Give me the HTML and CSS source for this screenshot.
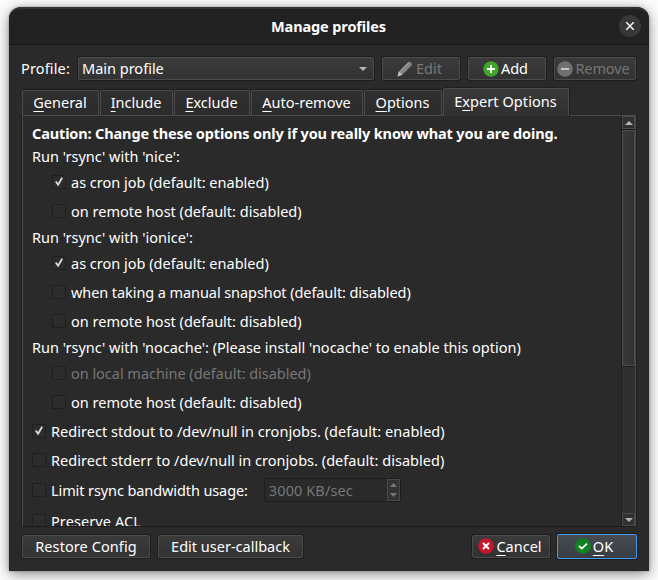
FILE: index.html
```html
<!DOCTYPE html>
<html lang="en">
<head>
<meta charset="utf-8">
<title>Manage profiles</title>
<link rel="stylesheet" href="styles.css">
</head>
<body>
<main class="window">
  <header class="titlebar">
    <h1>Manage profiles</h1>
    <button class="close" aria-label="Close"><svg width="10" height="10" viewBox="0 0 10 10"><path d="M1.3 1.3l7.4 7.4M8.7 1.3L1.3 8.7" stroke="#fff" stroke-width="1.5"/></svg></button>
  </header>
  <section class="profile-row">
    <span class="profile-label">Profile:</span>
    <div class="btn combo"><span>Main profile</span><svg width="8" height="4" viewBox="0 0 8 4"><path d="M0 0h8L4 4z" fill="#b5b5b5"/></svg></div>
    <button class="btn edit off"><svg width="16" height="16" viewBox="0 0 16 16"><path d="M.4 15.6l1.5-5L11 1.2c1.4-1.3 4.6.8 3.8 3L5.4 13.7z" fill="#858585"/><path d="M.4 15.6l1.5-5 3.5 3.1z" fill="#c4c4c4"/><path d="M3.5 10L12 1.5" stroke="#aaa"/></svg><span>Edit</span></button>
    <button class="btn add"><svg width="16" height="16" viewBox="0 0 16 16"><circle cx="8" cy="8" r="7.7" fill="#43a528"/><path d="M8 4v8M4 8h8" stroke="#fff" stroke-width="1.8"/></svg><span>Add</span></button>
    <button class="btn remove off"><svg width="16" height="16" viewBox="0 0 16 16"><circle cx="8" cy="8" r="7.8" fill="#707070"/><path d="M4 8h8" stroke="#d0d0d0" stroke-width="1.8"/></svg><span>Remove</span></button>
  </section>
  <nav class="tabs">
    <div class="tab general"><span><u>G</u>eneral</span></div>
    <div class="tab include"><span><u>I</u>nclude</span></div>
    <div class="tab exclude"><span><u>E</u>xclude</span></div>
    <div class="tab auto"><span><u>A</u>uto-remove</span></div>
    <div class="tab options"><span><u>O</u>ptions</span></div>
    <div class="tab expert active"><span>E<u>x</u>pert Options</span></div>
  </nav>
  <section class="pane">
    <div class="list">
      <div class="row head caution"><span>Caution: Change these options only if you really know what you are doing.</span></div>
      <div class="row head"><span>Run 'rsync' with 'nice':</span></div>
      <div class="row sub"><i class="box"><svg width="8" height="9" viewBox="0 0 8 9"><path d="M.8 4.5l2.3 3.2L7.2.8" fill="none" stroke="#ddd" stroke-width="1.8"/></svg></i><span>as cron job (default: enabled)</span></div>
      <div class="row sub"><i class="box"></i><span>on remote host (default: disabled)</span></div>
      <div class="row head"><span>Run 'rsync' with 'ionice':</span></div>
      <div class="row sub"><i class="box"><svg width="8" height="9" viewBox="0 0 8 9"><path d="M.8 4.5l2.3 3.2L7.2.8" fill="none" stroke="#ddd" stroke-width="1.8"/></svg></i><span>as cron job (default: enabled)</span></div>
      <div class="row sub manual"><i class="box"></i><span>when taking a manual snapshot (default: disabled)</span></div>
      <div class="row sub"><i class="box"></i><span>on remote host (default: disabled)</span></div>
      <div class="row head"><span>Run 'rsync' with 'nocache': (Please install 'nocache' to enable this option)</span></div>
      <div class="row sub off local"><i class="box"></i><span>on local machine (default: disabled)</span></div>
      <div class="row sub"><i class="box"></i><span>on remote host (default: disabled)</span></div>
      <div class="row redirect"><i class="box"><svg width="8" height="9" viewBox="0 0 8 9"><path d="M.8 4.5l2.3 3.2L7.2.8" fill="none" stroke="#ddd" stroke-width="1.8"/></svg></i><span>Redirect stdout to /dev/null in cronjobs. (default: enabled)</span></div>
      <div class="row redirect"><i class="box"></i><span>Redirect stderr to /dev/null in cronjobs. (default: disabled)</span></div>
      <div class="row limit"><i class="box"></i><span>Limit rsync bandwidth usage:</span>
        <div class="spin off"><span>3000 KB/sec</span><div class="steps"><svg width="7" height="14" viewBox="0 0 7 14"><path d="M0 4L3.5 0 7 4zM0 10h7L3.5 14z" fill="#777"/></svg></div></div>
      </div>
      <div class="row acl"><i class="box"></i><span>Preserve ACL</span></div>
    </div>
    <div class="scrollbar">
      <div class="arrow"><svg width="8" height="4" viewBox="0 0 8 4"><path d="M0 4L4 0l4 4z" fill="#b5b5b5"/></svg></div>
      <div class="thumb"></div>
      <div class="track"></div>
      <div class="arrow"><svg width="8" height="4" viewBox="0 0 8 4"><path d="M0 0h8L4 4z" fill="#b5b5b5"/></svg></div>
    </div>
  </section>
  <footer class="actions">
    <button class="btn restore"><span>Restore Config</span></button>
    <button class="btn callback"><span>Edit user-callback</span></button>
    <button class="btn cancel"><svg width="16" height="16" viewBox="0 0 16 16"><circle cx="8" cy="8" r="7.8" fill="#c7162b"/><path d="M5 5l6 6M11 5l-6 6" stroke="#fff" stroke-width="1.9"/></svg><span><u>C</u>ancel</span></button>
    <button class="btn ok"><svg width="16" height="16" viewBox="0 0 16 16"><circle cx="8" cy="8" r="7.8" fill="#0e8420"/><path d="M4 7.8l2.8 2.8L12 5.6" fill="none" stroke="#fff" stroke-width="1.8"/></svg><span><u>O</u>K</span></button>
  </footer>
</main>
</body>
</html>
```
FILE: styles.css
```css
* { box-sizing: border-box; }
html, body { height: 100%; }
body {
  margin: 0;
  padding: 7px 9px 9px;
  overflow: hidden;
  background: #fcfcfc;
  font: 14.5px/20px "Noto Sans", "Open Sans", sans-serif;
  color: #fff;
}
svg { display: block; flex: none; }
span { white-space: nowrap; }
u { text-decoration: underline; text-decoration-thickness: 1px; text-underline-offset: 3px; text-decoration-skip-ink: none; }
.window {
  width: 640px;
  height: 564px;
  background: #2a2a2a;
  border-radius: 12px 12px 0 0;
  box-shadow: 0 3px 14px rgba(0, 0, 0, .45), 0 0 3px rgba(0, 0, 0, .3);
}
.titlebar {
  height: 38px;
  display: grid;
  grid-template-columns: 40px 1fr 40px;
  align-items: center;
  background: #222;
  border-top: 2px solid #333;
  border-bottom: 1px solid #171717;
  border-radius: 12px 12px 0 0;
}
h1 { grid-column: 2; margin: 0; padding: 0 1px 2px 0; text-align: center; font-size: 14.5px; line-height: 20px; font-weight: 700; letter-spacing: -.12px; }
.close { width: 22px; height: 22px; padding: 0; border: 0; border-radius: 50%; background: #383838; display: grid; place-items: center; margin: 0 0 2px 10px; }
.profile-row { display: flex; align-items: center; height: 23px; margin: 12px 12px 0; }
.profile-label { width: 57px; padding-bottom: 1px; letter-spacing: .15px; }
.btn {
  height: 23px;
  padding: 0;
  display: flex;
  align-items: center;
  justify-content: center;
  gap: 2px;
  font: inherit;
  color: #fff;
  background: linear-gradient(#3b3b3b, #323232);
  border: 1px solid #4b4b4b;
  border-radius: 2px;
  box-shadow: 0 0 0 1px #1e1e1e;
}
.btn span, .tab span { padding-bottom: 1px; }
.combo { width: 296px; padding: 0 6px 0 3px; justify-content: space-between; margin-right: 8px; }
.edit { width: 78px; margin-right: 8px; }
.add { width: 78px; margin-right: 8px; }
.remove { width: 82px; letter-spacing: -.1px; }
.add svg, .edit svg, .remove svg { margin-left: -3px; }
.edit { gap: 3px; }
.btn.off, .off { color: #777; }
.tabs { height: 27px; margin: 8px 12px 0 13px; display: flex; align-items: flex-end; gap: 1px; }
.tab {
  height: 25px;
  display: flex;
  justify-content: center;
  align-items: center;
  background: linear-gradient(#303030, #2b2b2b);
  border: 1px solid #4b4b4b;
  border-bottom: 0;
  border-radius: 2px 2px 0 0;
  box-shadow: 0 -1px 0 #1e1e1e;
}
.tab span { padding: 0 1px 2px 0; }
.general { width: 77px; }
.include { width: 73px; }
.exclude { width: 76px; }
.auto { width: 112px; }
.options { width: 78px; }
.expert { width: 126px; letter-spacing: .07px; }
.tab.active { height: 28px; margin-bottom: -1px; background: linear-gradient(#393939, #303030); box-shadow: 1px 0 0 #1e1e1e, 0 -1px 0 #1e1e1e; position: relative; padding-bottom: 2px; }
.pane {
  height: 412px;
  margin: 0 13px 0 13px;
  display: flex;
  border: 1px solid #4b4b4b;
  border-bottom-color: #1c1c1c;
  box-shadow: -1px 0 0 #1e1e1e, 1px 0 0 #1e1e1e;
}
.list { flex: 1; min-width: 0; overflow: hidden; padding: 5px 0 0 9px; }
.row { height: 29px; display: flex; align-items: center; }
.head { height: 23px; }
.caution { font-weight: 700; letter-spacing: -.14px; }
.sub { padding-left: 20px; }
.manual { letter-spacing: -.08px; }
.local { letter-spacing: -.03px; }
.redirect { letter-spacing: .03px; }
.box { width: 14px; height: 14px; margin-right: 5px; border: 1px solid #1f1f1f; background: #2c2c2c; display: grid; place-items: center; flex: none; }
.limit { height: 31px; letter-spacing: -.1px; }
.acl { letter-spacing: .1px; height: 31px; }
.spin { display: flex; width: 137px; height: 24px; margin-left: 16px; padding-left: 4px; border: 1px solid #1e1e1e; border-radius: 2px; align-items: center; justify-content: space-between; letter-spacing: .1px; }
.steps { width: 13px; height: 22px; border: 1px solid #484848; background: #333; display: grid; place-items: center; }
.scrollbar { width: 14px; display: flex; flex-direction: column; border-left: 1px solid #1e1e1e; background: #303030; }
.arrow { height: 13px; border: 1px solid #4b4b4b; background: #303030; display: grid; place-items: center; }
.thumb { height: 236px; margin-top: 1px; border: 1px solid #4b4b4b; background: linear-gradient(90deg, #393939, #323232); box-shadow: 0 -1px #1c1c1c, 0 1px #1c1c1c; }
.track { flex: 1; }
.actions { display: flex; align-items: center; margin: 7px 12px 0 13px; }
.restore { width: 128px; margin-right: 8px; letter-spacing: .08px; }
.callback { width: 145px; margin-right: auto; }
.cancel { width: 78px; margin-right: 7px; }
.cancel svg { margin: -1px 0 0 -2px; }
.ok { width: 80px; height: 25px; border: 1px solid #419bf2; background: linear-gradient(#474c53, #383d44); }
.ok svg { margin: -1px 0 0 -6px; }
```
